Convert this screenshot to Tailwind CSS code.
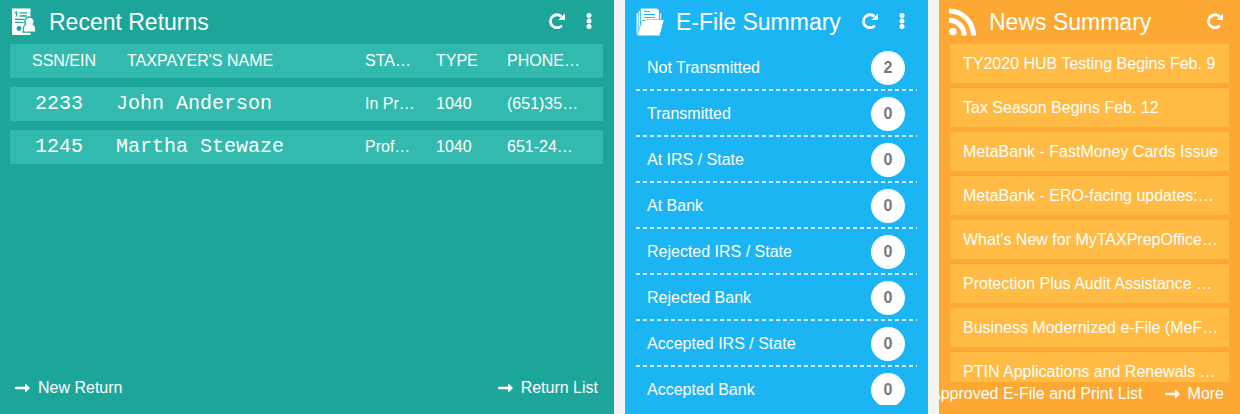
<!DOCTYPE html>
<html lang="en">
<head>
    <meta charset="UTF-8">
    <meta name="viewport" content="width=device-width, initial-scale=1.0">
    <title>Dashboard</title>
    <script src="https://cdn.jsdelivr.net/npm/@tailwindcss/browser@4"></script>
</head>
<body class="bg-[#f3f3f3] font-['Liberation_Sans',Arial,sans-serif] text-base text-white">
    <!-- Shared icons -->
    <svg class="hidden">
        <symbol id="refresh" viewBox="0 0 16 16">
            <path d="M12.800 12.600A6.500 6.500 0 1 1 12.400 3.500" fill="none" stroke="currentColor" stroke-width="2.800" />
            <path d="M16 .4v6.600H9.400z" fill="currentColor" />
        </symbol>
        <symbol id="dots" viewBox="0 0 6 16">
            <circle cx="3" cy="2.500" r="2.500" /><circle cx="3" cy="8" r="2.500" /><circle cx="3" cy="13.500" r="2.500" />
        </symbol>
        <symbol id="arrow" viewBox="0 0 15 8">
            <path d="M1.300 4h10" stroke="currentColor" stroke-width="2.600" stroke-linecap="round" />
            <path d="M10 0h1l4 4-4 4h-1z" fill="currentColor" />
        </symbol>
    </svg>
    <main class="grid h-screen grid-cols-[614fr_303fr_301fr] gap-[11px]">
        <section class="flex min-w-0 flex-col overflow-hidden bg-[#1ca69a] pr-[11px] pb-[14px] pl-[10px]">
            <header class="flex h-[44px] shrink-0 items-center pr-[11px] pb-px">
                <svg class="mr-[13px] h-[28px] w-[26px]" viewBox="0 0 26 28" fill="#fff">
                    <path d="M2 .5h18.500v26.500H2z" />
                    <path d="M19.500 9.500a4.200 4.200 0 0 1 3 7c2 1 2.700 2.500 2.700 7H13.800c0-4.500.7-6 2.700-7a4.200 4.200 0 0 1 3-7z" stroke="#1ca69a" stroke-width="2.600" paint-order="stroke" />
                    <path d="M5 5l1.500-1v4.500M9.500 4.800H17M9.500 8H17M5 11.300h9M5 14.300h8.500" fill="none" stroke="#1ca69a" stroke-width="1.300" />
                    <circle cx="9" cy="20.500" r="2.400" fill="#1ca69a" />
                </svg>
                <h2 class="flex-1 pt-0.5 text-[23px]">Recent Returns</h2>
                <button class="mr-[21px] pb-0.5" aria-label="Refresh"><svg class="size-4"><use href="#refresh" /></svg></button>
                <button class="pb-0.5" aria-label="Menu"><svg class="h-4 w-[6px] fill-white"><use href="#dots" /></svg></button>
            </header>
            <table class="-mt-[9px] w-full table-fixed border-separate border-spacing-x-0 border-spacing-y-[9px] text-left">
                <colgroup>
                    <col class="w-[98px]"><col><col class="w-[71px]"><col class="w-[71px]"><col class="w-[106px]">
                </colgroup>
                <thead>
                    <tr class="h-[34px] bg-[#33baae]">
                        <th class="pl-[22px] font-normal">SSN/EIN</th>
                        <th class="pl-[19px] font-normal">TAXPAYER'S NAME</th>
                        <th class="pl-[10px] font-normal">STA…</th>
                        <th class="pl-[10px] font-normal">TYPE</th>
                        <th class="pl-[10px] font-normal">PHONE…</th>
                    </tr>
                </thead>
                <tbody>
                    <tr class="h-[34px] bg-[#33baae]">
                        <td class="pl-[25px] font-['Liberation_Mono',monospace] text-xl leading-6">2233</td>
                        <td class="pl-2 font-['Liberation_Mono',monospace] text-xl leading-6">John Anderson</td>
                        <td class="pl-[10px]">In Pr…</td>
                        <td class="pl-[10px]">1040</td>
                        <td class="pl-[10px]">(651)35…</td>
                    </tr>
                    <tr class="h-[34px] bg-[#33baae]">
                        <td class="pl-[25px] font-['Liberation_Mono',monospace] text-xl leading-6">1245</td>
                        <td class="pl-2 font-['Liberation_Mono',monospace] text-xl leading-6">Martha Stewaze</td>
                        <td class="pl-[10px]">Prof…</td>
                        <td class="pl-[10px]">1040</td>
                        <td class="pl-[10px]">651-24…</td>
                    </tr>
                </tbody>
            </table>
            <footer class="mt-auto flex justify-between px-[5px]">
                <a href="#" class="flex items-center gap-2"><svg class="h-2 w-[15px]"><use href="#arrow" /></svg>New Return</a>
                <a href="#" class="flex items-center gap-2"><svg class="h-2 w-[15px]"><use href="#arrow" /></svg>Return List</a>
            </footer>
        </section>

        <section class="flex min-w-0 flex-col overflow-hidden bg-[#1cb5f4] px-[11px] pb-[9px]">
            <header class="mb-px flex h-[44px] shrink-0 items-center pr-3 pb-px">
                <svg class="mr-3 h-[28px] w-[28px]" viewBox="0 0 28 28" fill="#fff">
                    <path d="M.5 5h1.500v21H.5z" opacity=".8" />
                    <path d="M2.500 3H4v18l-1.500 4z" opacity=".9" />
                    <path d="M4.800 .5H21l2 2V12H7.500L4.800 20z" />
                    <path d="M8 3.500h6M8 6.500h11M8 9.500h11" stroke="#1cb5f4" stroke-width="1" />
                    <path d="M24 5h1.200v7H24z" opacity=".8" />
                    <path d="M6 13.200h2L10 12h17.800L23.500 27.500H1.300z" stroke="#1cb5f4" stroke-width="1" paint-order="stroke" />
                </svg>
                <h2 class="flex-1 pt-0.5 text-[23px] whitespace-nowrap">E-File Summary</h2>
                <button class="mr-[21px] pb-0.5" aria-label="Refresh"><svg class="size-4"><use href="#refresh" /></svg></button>
                <button class="pb-0.5" aria-label="Menu"><svg class="h-4 w-[6px] fill-white"><use href="#dots" /></svg></button>
            </header>
            <!-- Dashed separators are a 7px repeating gradient: 4px dash, 3px gap -->
            <ul class="min-h-0 flex-1 overflow-hidden [&>li]:flex [&>li]:h-[46px] [&>li]:items-center [&>li]:justify-between [&>li]:bg-[linear-gradient(to_right,#d5f0fd_4px,transparent_4px)] [&>li]:bg-[length:7px_2px] [&>li]:bg-[position:left_bottom] [&>li]:bg-repeat-x [&>li]:pr-3 [&>li]:pb-px [&>li]:pl-[11px] [&_b]:size-[34px] [&_b]:rounded-full [&_b]:bg-white [&_b]:text-center [&_b]:leading-[34px] [&_b]:text-[#777]">
                <li>Not Transmitted <b>2</b></li>
                <li>Transmitted <b>0</b></li>
                <li>At IRS / State <b>0</b></li>
                <li>At Bank <b>0</b></li>
                <li>Rejected IRS / State <b>0</b></li>
                <li>Rejected Bank <b>0</b></li>
                <li>Accepted IRS / State <b>0</b></li>
                <li>Accepted Bank <b>0</b></li>
            </ul>
        </section>

        <section class="flex min-w-0 flex-col overflow-hidden bg-[#fca833] px-[11px] pb-2">
            <header class="flex h-[44px] shrink-0 items-center pr-[6px] pb-px">
                <svg class="mr-3 -ml-px h-[28px] w-[28px]" viewBox="0 0 28 28" fill="none" stroke="#fff" stroke-width="5">
                    <circle cx="4" cy="23.500" r="3.800" fill="#fff" stroke="none" />
                    <path d="M0 12.300A15 15 0 0 1 15.200 27.500M0 3A24.500 24.500 0 0 1 24.500 27.500" />
                </svg>
                <h2 class="flex-1 pt-0.5 text-[23px] whitespace-nowrap">News Summary</h2>
                <button class="pb-0.5" aria-label="Refresh"><svg class="size-4"><use href="#refresh" /></svg></button>
            </header>
            <ul class="flex min-h-0 flex-1 flex-col gap-[5px] overflow-hidden [&_a]:block [&_a]:h-[39px] [&_a]:bg-[#ffbb44] [&_a]:pl-[13px] [&_a]:leading-[39px] [&_a]:whitespace-nowrap">
                <li><a href="#">TY2020 HUB Testing Begins Feb. 9</a></li>
                <li><a href="#">Tax Season Begins Feb. 12</a></li>
                <li><a href="#">MetaBank - FastMoney Cards Issue</a></li>
                <li><a href="#">MetaBank - ERO-facing updates:…</a></li>
                <li><a href="#">What's New for MyTAXPrepOffice…</a></li>
                <li><a href="#">Protection Plus Audit Assistance …</a></li>
                <li><a href="#">Business Modernized e-File (MeF…</a></li>
                <li><a href="#">PTIN Applications and Renewals …</a></li>
            </ul>
            <footer class="flex justify-end gap-[22px] pr-[5px] whitespace-nowrap">
                <a href="#">Approved E-File and Print List</a>
                <a href="#" class="flex items-center gap-2"><svg class="h-2 w-[15px]"><use href="#arrow" /></svg>More</a>
            </footer>
        </section>
    </main>
</body>
</html>
